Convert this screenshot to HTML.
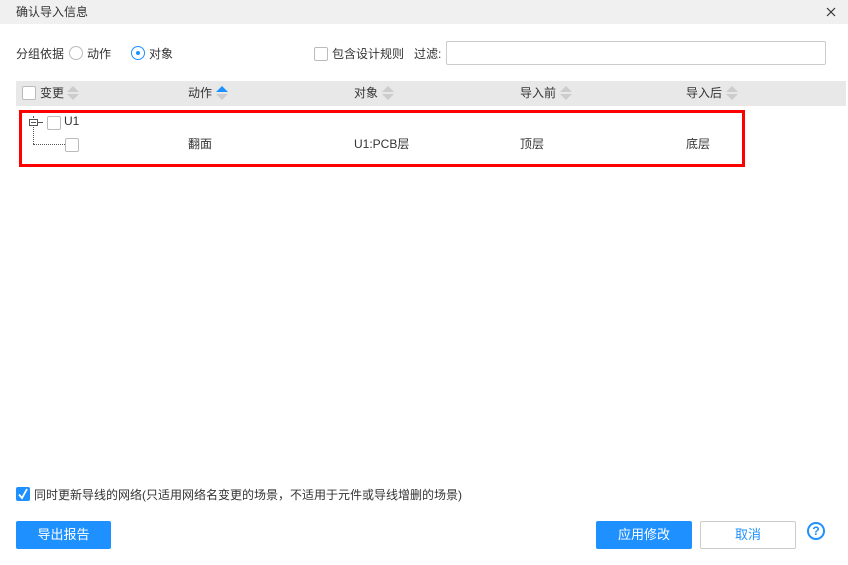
<!DOCTYPE html>
<html><head><meta charset="utf-8"><style>
*{margin:0;padding:0;box-sizing:border-box}
body{width:848px;height:565px;background:#fff;font-family:"Liberation Sans","Noto Sans CJK SC",sans-serif;font-size:12px;color:#333;position:relative;overflow:hidden}
.a{position:absolute;white-space:nowrap}
.cb{position:absolute;width:14px;height:14px;border:1px solid #bbb;background:#fff;border-radius:2px}
.sort{position:absolute;width:0;height:0;border-left:6px solid transparent;border-right:6px solid transparent}
.btn{position:absolute;height:28px;line-height:28px;text-align:center;font-size:13px;border-radius:2px}
</style></head><body>
<div class="a" style="left:0;top:0;width:848px;height:24px;background:#f0f0f0"></div>
<div class="a" style="left:16px;top:3px;font-size:12px">确认导入信息</div>
<svg class="a" style="left:826px;top:7px" width="10" height="10"><path d="M1 1L9 9M9 1L1 9" stroke="#333" stroke-width="1.2"/></svg>

<div class="a" style="left:16px;top:45px">分组依据</div>
<div class="a" style="left:69px;top:46px;width:14px;height:14px;border:1px solid #bbb;border-radius:50%"></div>
<div class="a" style="left:87px;top:45px">动作</div>
<div class="a" style="left:131px;top:46px;width:14px;height:14px;border:1px solid #1e90ff;border-radius:50%"></div>
<div class="a" style="left:136px;top:51px;width:4px;height:4px;background:#1e90ff;border-radius:50%"></div>
<div class="a" style="left:149px;top:45px">对象</div>
<div class="cb" style="left:314px;top:47px"></div>
<div class="a" style="left:332px;top:45px">包含设计规则</div>
<div class="a" style="left:414px;top:45px">过滤:</div>
<div class="a" style="left:446px;top:41px;width:380px;height:24px;border:1px solid #ccc;border-radius:2px"></div>

<div class="a" style="left:16px;top:81px;width:830px;height:25px;background:#e8e8e8"></div>
<div class="cb" style="left:22px;top:86px"></div>
<div class="a" style="left:40px;top:84px">变更</div>
<div class="sort" style="left:67px;top:86px;border-bottom:6px solid #ccc"></div>
<div class="sort" style="left:67px;top:94px;border-top:6px solid #ccc"></div>
<div class="a" style="left:188px;top:84px">动作</div>
<div class="sort" style="left:216px;top:86px;border-bottom:6px solid #1e90ff"></div>
<div class="sort" style="left:216px;top:94px;border-top:6px solid #ccc"></div>
<div class="a" style="left:354px;top:84px">对象</div>
<div class="sort" style="left:382px;top:86px;border-bottom:6px solid #ccc"></div>
<div class="sort" style="left:382px;top:94px;border-top:6px solid #ccc"></div>
<div class="a" style="left:520px;top:84px">导入前</div>
<div class="sort" style="left:560px;top:86px;border-bottom:6px solid #ccc"></div>
<div class="sort" style="left:560px;top:94px;border-top:6px solid #ccc"></div>
<div class="a" style="left:686px;top:84px">导入后</div>
<div class="sort" style="left:726px;top:86px;border-bottom:6px solid #ccc"></div>
<div class="sort" style="left:726px;top:94px;border-top:6px solid #ccc"></div>

<div class="a" style="left:19px;top:110px;width:726px;height:57px;border:3px solid #f00"></div>
<div class="a" style="left:33px;top:116px;height:28px;border-left:1px dotted #555"></div>
<div class="a" style="left:33px;top:144px;width:32px;border-top:1px dotted #555"></div>
<div class="a" style="left:29px;top:119px;width:9px;height:7px;border:1px solid #555;background:#fff"></div>
<div class="a" style="left:31px;top:122px;width:5px;border-top:1px solid #555"></div>
<div class="a" style="left:38px;top:122px;width:5px;border-top:1px solid #555"></div>
<div class="cb" style="left:47px;top:116px"></div>
<div class="a" style="left:64px;top:114px">U1</div>
<div class="cb" style="left:65px;top:138px"></div>
<div class="a" style="left:188px;top:135px">翻面</div>
<div class="a" style="left:354px;top:135px">U1:PCB层</div>
<div class="a" style="left:520px;top:135px">顶层</div>
<div class="a" style="left:686px;top:135px">底层</div>

<div class="a" style="left:16px;top:487px;width:14px;height:14px;background:#1e90ff;border-radius:2px"></div>
<svg class="a" style="left:16px;top:487px" width="14" height="14"><path d="M3 7.5L6 11L11 2" stroke="#fff" stroke-width="1.8" fill="none"/></svg>
<div class="a" style="left:34px;top:486px">同时更新导线的网络(只适用网络名变更的场景，不适用于元件或导线增删的场景)</div>

<div class="btn" style="left:16px;top:521px;width:95px;background:#1e90ff;color:#fff">导出报告</div>
<div class="btn" style="left:596px;top:521px;width:96px;background:#1e90ff;color:#fff">应用修改</div>
<div class="btn" style="left:700px;top:521px;width:96px;border:1px solid #ccc;color:#1e90ff;line-height:26px">取消</div>
<div class="a" style="left:807px;top:522px;width:18px;height:18px;border:2px solid #1e90ff;border-radius:50%;color:#1e90ff;font-size:12px;font-weight:bold;line-height:14px;text-align:center">?</div>
</body></html>
